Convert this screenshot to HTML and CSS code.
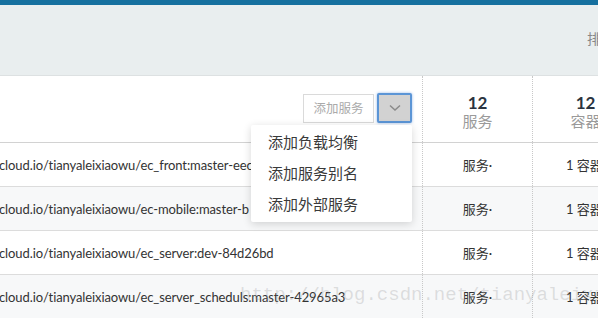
FILE: index.html
```html
<!DOCTYPE html>
<html>
<head>
<meta charset="utf-8">
<link rel="stylesheet" href="styles.css">
</head>
<body>
<div class="topbar"></div>
<div class="header"><span class="sort">排</span></div>
<div class="table">
  <div class="row head">
    <div class="c1">
      <div class="add">
        <div class="add-input">添加服务</div>
        <div class="add-btn"><svg width="12" height="8" viewBox="0 0 12 8"><path d="M1 1.5 L6 6 L11 1.5" fill="none" stroke="#8a8a8a" stroke-width="1.5"/></svg></div>
      </div>
    </div>
    <div class="c2"><div class="num">12</div><div class="lbl">服务</div></div>
    <div class="c3"><div class="num">12</div><div class="lbl">容器</div></div>
  </div>
  <div class="row">
    <div class="c1"><span class="img">cloud.io/tianyaleixiaowu/ec_front:master-eec</span></div>
    <div class="c2">服务·</div>
    <div class="c3 left">1 容器</div>
  </div>
  <div class="row alt">
    <div class="c1"><span class="img">cloud.io/tianyaleixiaowu/ec-mobile:master-b</span></div>
    <div class="c2">服务·</div>
    <div class="c3 left">1 容器</div>
  </div>
  <div class="row">
    <div class="c1"><span class="img">cloud.io/tianyaleixiaowu/ec_server:dev-84d26bd</span></div>
    <div class="c2">服务·</div>
    <div class="c3 left">1 容器</div>
  </div>
  <div class="row alt">
    <div class="c1"><span class="img">cloud.io/tianyaleixiaowu/ec_server_scheduls:master-42965a3</span></div>
    <div class="c2">服务·</div>
    <div class="c3 left">1 容器</div>
  </div>
  <div class="menu">
    <div class="item">添加负载均衡</div>
    <div class="item">添加服务别名</div>
    <div class="item">添加外部服务</div>
  </div>
</div>
<div class="watermark">http://blog.csdn.net/tianyaleixiaowu</div>
</body>
</html>
```
FILE: styles.css
```css
html, body {
  margin: 0;
  padding: 0;
  width: 598px;
  height: 318px;
  overflow: hidden;
  background: #fff;
  font-family: Lato, "Noto Sans CJK SC", sans-serif;
}
.topbar {
  height: 5px;
  background: #16709f;
}
.header {
  height: 70px;
  background: #e9eeef;
  display: flex;
  align-items: center;
  justify-content: flex-end;
  border-bottom: 1px solid #dde1e2;
}
.sort {
  font-size: 14px;
  color: #888;
  margin-right: -3px;
  margin-top: -4px;
}
.table {
  position: relative;
}
.row {
  display: grid;
  grid-template-columns: 422px 110px 106px;
  height: 43px;
  border-bottom: 1px solid #dcdcdc;
  font-size: 13px;
  color: #333;
  white-space: nowrap;
}
.row.alt {
  background: #f7f8f9;
}
.row.head {
  height: 66px;
  border-bottom-color: #d2d2d2;
}
.c1 {
  display: flex;
  align-items: center;
  overflow: hidden;
}
.c2, .c3 {
  border-left: 1px dotted #c8c8c8;
  display: flex;
  flex-direction: column;
  align-items: center;
  justify-content: center;
}
.c3.left {
  align-items: flex-start;
  padding-left: 33px;
}
.img {
  margin-left: -1px;
  letter-spacing: -0.1px;
}
.head .c1 {
  justify-content: flex-end;
  padding-right: 10px;
}
.add {
  display: flex;
  align-items: center;
  margin-top: -2px;
}
.add-input {
  width: 69px;
  height: 27px;
  border: 1px solid #dadada;
  color: #aaa;
  font-size: 12.5px;
  line-height: 27px;
  text-align: center;
  box-sizing: content-box;
  margin-right: 3px;
}
.add-btn {
  width: 31px;
  height: 26px;
  background: #d2d2d2;
  border: 2px solid #5b95d6;
  border-radius: 2px;
  box-shadow: 0 0 3px rgba(80, 140, 220, 0.6);
  display: flex;
  align-items: center;
  justify-content: center;
}
.num {
  font-size: 17px;
  font-weight: 700;
  color: #2b3440;
  line-height: 18px;
  margin-top: 6px;
}
.lbl {
  font-size: 15px;
  color: #9a9a9a;
  line-height: 18px;
}
.menu {
  position: absolute;
  left: 251px;
  top: 49px;
  width: 161px;
  padding: 2px 0;
  background: #fff;
  border-radius: 2px;
  box-shadow: 0 2px 8px rgba(0, 0, 0, 0.16);
}
.item {
  height: 31px;
  line-height: 31px;
  padding-left: 17px;
  font-size: 15px;
  color: #3a3a3a;
}
.watermark {
  position: absolute;
  left: 240px;
  top: 284px;
  font-family: "Liberation Mono", monospace;
  font-size: 19px;
  color: rgba(150, 150, 150, 0.28);
  white-space: nowrap;
}
```
